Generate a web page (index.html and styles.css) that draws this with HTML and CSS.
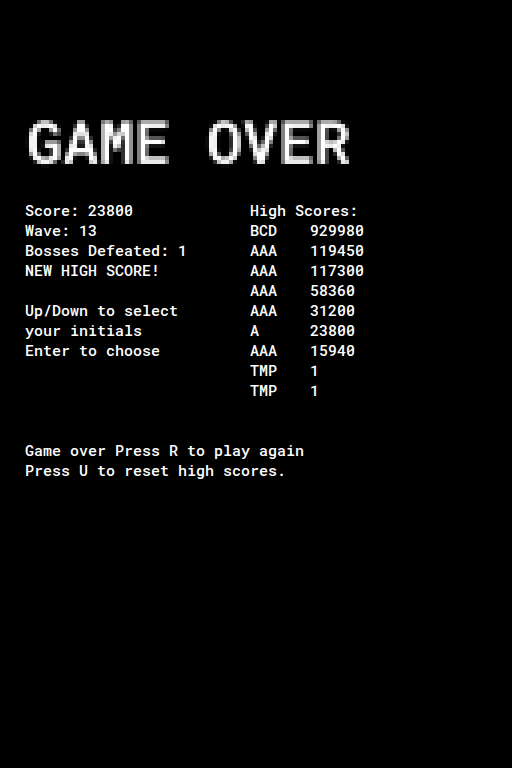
FILE: index.html
```html
<!DOCTYPE html>
<html lang="en">
<head>
<meta charset="utf-8">
<title>Game Over</title>
<link rel="stylesheet" href="styles.css">
</head>
<body>
<main class="screen">
  <h1 class="title">GAME OVER</h1>
  <div class="columns">
    <section class="summary">
      <p>Score: 23800</p>
      <p>Wave: 13</p>
      <p>Bosses Defeated: 1</p>
      <p>NEW HIGH SCORE!</p>
      <p class="hint">Up/Down to select<br>your initials<br>Enter to choose</p>
    </section>
    <table class="scores">
      <caption>High Scores:</caption>
      <tbody>
        <tr><th scope="row">BCD</th><td>929980</td></tr>
        <tr><th scope="row">AAA</th><td>119450</td></tr>
        <tr><th scope="row">AAA</th><td>117300</td></tr>
        <tr><th scope="row">AAA</th><td>58360</td></tr>
        <tr><th scope="row">AAA</th><td>31200</td></tr>
        <tr><th scope="row">A</th><td>23800</td></tr>
        <tr><th scope="row">AAA</th><td>15940</td></tr>
        <tr><th scope="row">TMP</th><td>1</td></tr>
        <tr><th scope="row">TMP</th><td>1</td></tr>
      </tbody>
    </table>
  </div>
  <footer class="actions">
    <p>Game over Press R to play again</p>
    <p>Press U to reset high scores.</p>
  </footer>
</main>
<svg class="filters" width="0" height="0" aria-hidden="true">
  <!-- Turns the heading into 4px blocks: soften, sample one dot per cell, grow each dot to fill its cell. -->
  <filter id="pixelate" x="0" y="0" width="100%" height="100%" primitiveUnits="userSpaceOnUse" color-interpolation-filters="sRGB">
    <feGaussianBlur in="SourceGraphic" stdDeviation="1.2" result="soft"/>
    <feFlood x="1" y="1" width="1" height="1" flood-color="#fff"/>
    <feComposite operator="over" in2="SourceGraphic" x="0" y="0" width="4" height="4" result="cellbase"/>
    <feTile in="cellbase" result="grid"/>
    <feComposite in="soft" in2="grid" operator="in" result="dots"/>
    <feOffset in="dots" dx="1" dy="0" result="dotsRight"/>
    <feComposite in="dots" in2="dotsRight" operator="arithmetic" k1="0" k2="1" k3="1" k4="0" result="pairs"/>
    <feOffset in="pairs" dx="0" dy="1" result="pairsDown"/>
    <feComposite in="pairs" in2="pairsDown" operator="arithmetic" k1="0" k2="1" k3="1" k4="0" result="quads"/>
    <feMorphology in="quads" operator="dilate" radius="1"/>
  </filter>
</svg>
</body>
</html>
```
FILE: styles.css
```css
* {
  box-sizing: border-box;
}

body {
  margin: 0;
  background: #000;
  color: #fff;
  font: 500 15px/20px "Roboto Mono", "DejaVu Sans Mono", "Liberation Mono", monospace;
}

p {
  margin: 0;
}

.screen {
  min-height: 100vh;
  padding: 108px 25px 0;
}

.title {
  margin: 0 0 28px;
  padding-left: 1px;
  font-size: 60px;
  line-height: 64px;
  font-weight: 600;
  white-space: nowrap;
  filter: url(#pixelate);
}

.columns {
  display: grid;
  grid-template-columns: 225px 1fr;
  align-items: start;
}

.hint {
  margin-top: 20px;
}

.scores {
  border-collapse: collapse;
  justify-self: start;
  text-align: left;
}

.scores caption {
  text-align: left;
  white-space: nowrap;
}

.scores th,
.scores td {
  padding: 0;
  font-weight: inherit;
}

.scores th {
  width: 60px;
}

.actions {
  margin-top: 40px;
}

.filters {
  position: absolute;
}
```
